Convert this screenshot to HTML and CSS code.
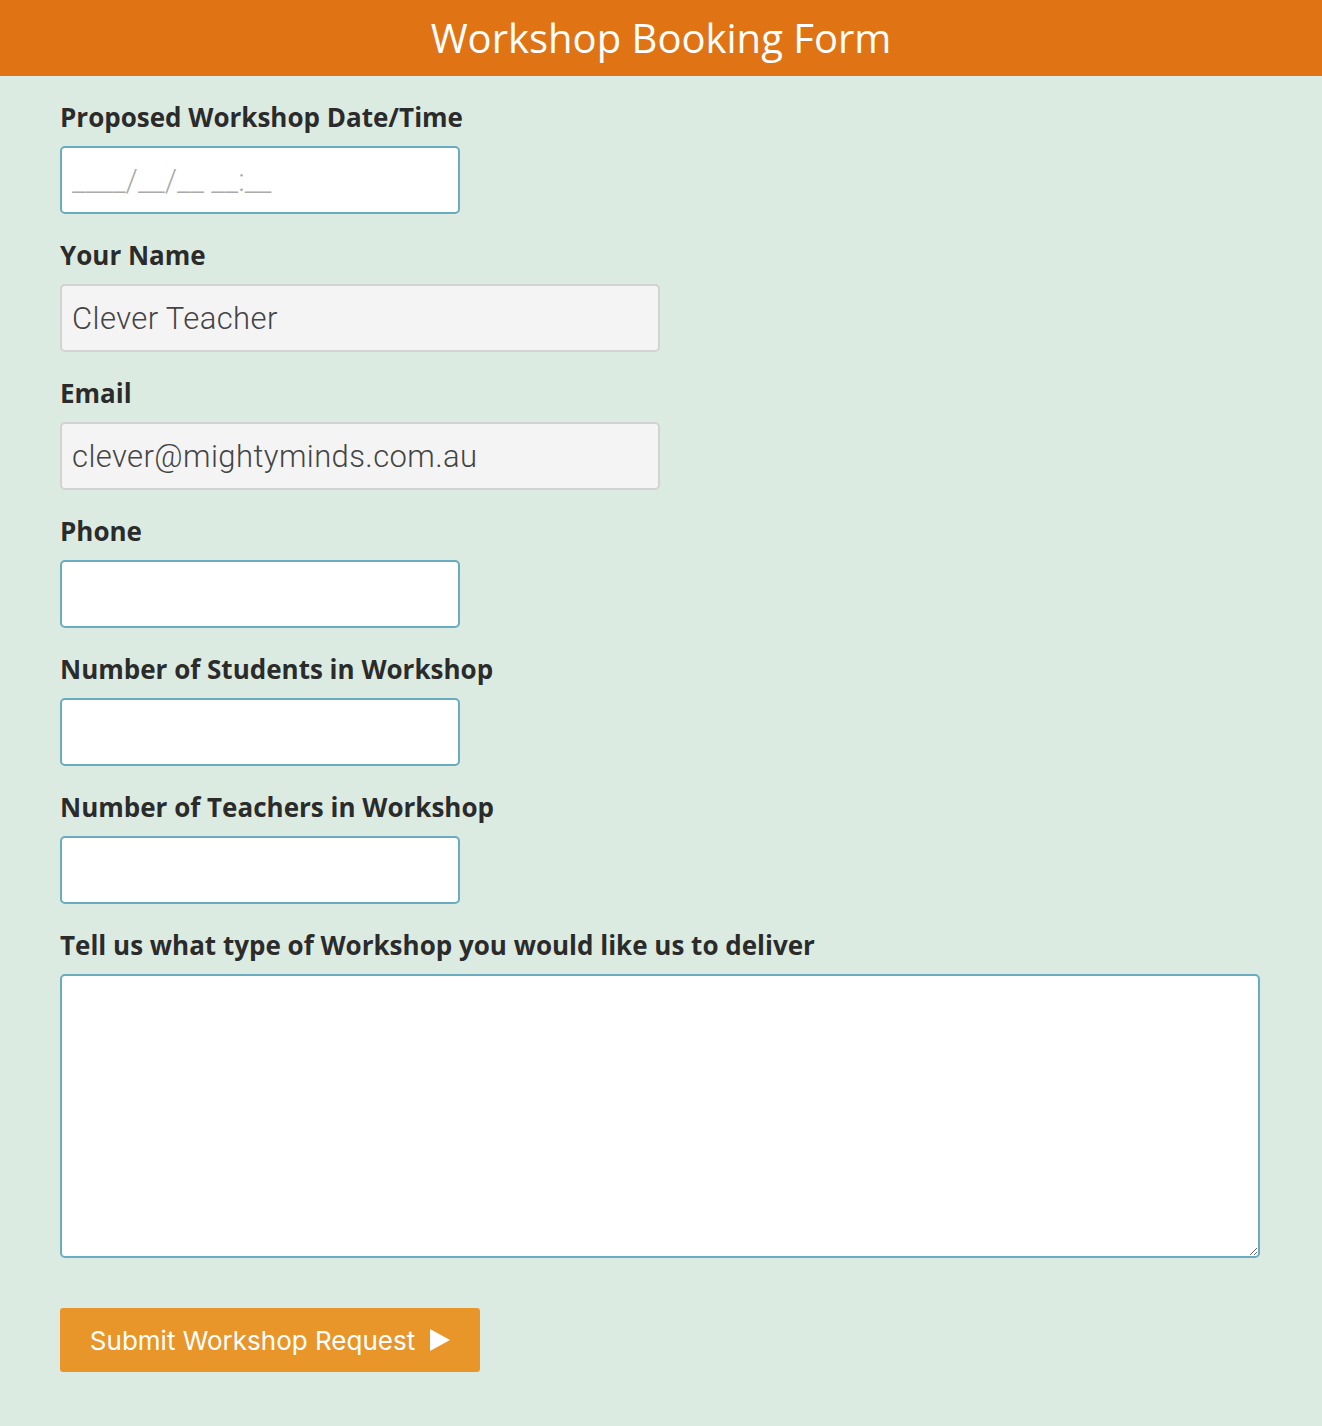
FILE: index.html
```html
<!DOCTYPE html>
<html>
<head>
<meta charset="utf-8">
<link rel="stylesheet" href="styles.css">
</head>
<body>
<header class="top">Workshop Booking Form</header>
<form class="form">
  <div class="field">
    <label class="label">Proposed Workshop Date/Time</label>
    <input class="input small" type="text" placeholder="____/__/__ __:__">
  </div>
  <div class="field">
    <label class="label">Your Name</label>
    <input class="input wide filled" type="text" value="Clever Teacher">
  </div>
  <div class="field">
    <label class="label">Email</label>
    <input class="input wide filled" type="text" value="clever@mightyminds.com.au">
  </div>
  <div class="field">
    <label class="label">Phone</label>
    <input class="input small" type="text">
  </div>
  <div class="field">
    <label class="label">Number of Students in Workshop</label>
    <input class="input small" type="text">
  </div>
  <div class="field">
    <label class="label">Number of Teachers in Workshop</label>
    <input class="input small" type="text">
  </div>
  <div class="field">
    <label class="label">Tell us what type of Workshop you would like us to deliver</label>
    <textarea class="input area"></textarea>
  </div>
  <button class="submit" type="button">Submit Workshop Request <span class="arrow"></span></button>
</form>
</body>
</html>
```
FILE: styles.css
```css
html, body {
  margin: 0;
  padding: 0;
  background: #dcebe2;
  height: 1426px;
}
.top {
  background: #e07415;
  color: #fff;
  font-family: "Open Sans", sans-serif;
  font-weight: 400;
  font-size: 40px;
  height: 76px;
  line-height: 76px;
  text-align: center;
}
.form {
  padding: 24px 60px 0 60px;
  display: flex;
  flex-direction: column;
}
.field {
  display: flex;
  flex-direction: column;
  margin-bottom: 24px;
}
.label {
  font-family: "Open Sans", sans-serif;
  font-weight: 700;
  font-size: 26px;
  line-height: 34px;
  color: #2b2b2b;
  margin-bottom: 12px;
}
.input {
  box-sizing: border-box;
  height: 68px;
  border: 2px solid #6aacbf;
  border-radius: 5px;
  background: #fff;
  font-family: Roboto, sans-serif;
  font-weight: 300;
  font-size: 31px;
  letter-spacing: 0.4px;
  color: #444;
  padding: 0 10px;
  margin: 0;
  outline: none;
}
.input::placeholder {
  color: #aaa;
  letter-spacing: 0;
}
.small { width: 400px; }
.wide { width: 600px; }
.filled {
  background: #f4f4f4;
  border-color: #d2d2d2;
}
.area {
  width: 1200px;
  height: 284px;
  resize: vertical;
  margin-bottom: 26px;
}
.submit {
  align-self: flex-start;
  box-sizing: border-box;
  width: 420px;
  height: 64px;
  background: #e8962a;
  border: none;
  border-radius: 3px;
  color: #fff;
  font-family: Inter, sans-serif;
  font-size: 26px;
  font-weight: 400;
  display: flex;
  align-items: center;
  justify-content: center;
  gap: 15px;
  padding: 0;
}
.arrow {
  width: 0;
  height: 0;
  border-top: 11px solid transparent;
  border-bottom: 11px solid transparent;
  border-left: 20px solid #fff;
}
```
